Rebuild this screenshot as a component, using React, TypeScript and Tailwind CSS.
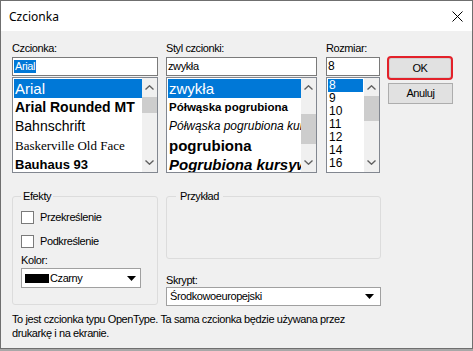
import React from "react";

const ui = "font-['Liberation_Sans',Arial,sans-serif] text-[11px] leading-[13px] tracking-[-0.4px] text-black";

function Chevron({ up }: { up?: boolean }) {
  return (
    <svg width="9" height="5" viewBox="0 0 9 5" className="block">
      <polyline
        points={up ? "0.5,4.5 4.5,0.8 8.5,4.5" : "0.5,0.5 4.5,4.2 8.5,0.5"}
        fill="none"
        stroke="#606060"
        strokeWidth="1.4"
      />
    </svg>
  );
}

function Scrollbar({ thumb }: { thumb: string }) {
  return (
    <div className="flex w-[15px] flex-col bg-[#f0f0f0]">
      <div className="flex h-[18px] items-center justify-center">
        <Chevron up />
      </div>
      <div className="flex-1">
        <div className={`bg-[#cdcdcd] ${thumb}`} />
      </div>
      <div className="flex h-[14px] items-start justify-center pt-[2px]">
        <Chevron />
      </div>
    </div>
  );
}

function ListBox({ thumb, children }: { thumb: string; children: React.ReactNode }) {
  return (
    <div className="mt-[1px] flex h-[96px] border border-[#828790] bg-white">
      <div className="min-w-0 flex-1 overflow-hidden pl-[1px] pt-[1px]">{children}</div>
      <Scrollbar thumb={thumb} />
    </div>
  );
}

function Row({ sel, className = "", children }: { sel?: boolean; className?: string; children: React.ReactNode }) {
  return (
    <div
      className={`flex h-[19px] items-center overflow-hidden whitespace-nowrap pl-[1px] leading-[19px] ${
        sel ? "bg-[#0078d7] text-white" : "text-black"
      } ${className}`}
    >
      {children}
    </div>
  );
}

function Size({ sel, children }: { sel?: boolean; children: React.ReactNode }) {
  return (
    <div
      className={`flex h-[13px] items-center pl-[1px] font-['Liberation_Sans',Arial,sans-serif] text-[12px] leading-[13px] tracking-normal ${
        sel ? "w-[35px] bg-[#0078d7] text-white" : ""
      }`}
    >
      {children}
    </div>
  );
}

function Input({ children }: { children: React.ReactNode }) {
  return (
    <div className="mt-[2px] flex h-[19px] items-center border border-[#7a7a7a] bg-white pl-[1px]">{children}</div>
  );
}

function Triangle() {
  return (
    <svg width="9" height="5" viewBox="0 0 9 5" className="block">
      <polygon points="0,0 9,0 4.5,5" fill="#000" />
    </svg>
  );
}

function Check({ label }: { label: string }) {
  return (
    <div className="flex h-[13px] items-center gap-[6px] pl-[8px]">
      <div className="h-[13px] w-[13px] border border-[#7a7a7a] bg-white" />
      <span>{label}</span>
    </div>
  );
}

export default function App() {
  return (
    <div className="h-[351px] w-[473px] bg-[#a8a8a8]">
      <div className={`flex h-[349px] w-[473px] flex-col border border-[#6f6f6f] bg-[#f0f0f0] ${ui}`}>
        <div className="flex h-[30px] items-center justify-between bg-white pl-[8px] pr-[9px]">
          <span className="font-['Segoe_UI','Noto_Sans',sans-serif] text-[12px] tracking-normal">Czcionka</span>
          <svg width="11" height="11" viewBox="0 0 11 11">
            <path d="M0.5 0.5 L10.5 10.5 M10.5 0.5 L0.5 10.5" stroke="#000" strokeWidth="1" />
          </svg>
        </div>

        <div className="flex flex-col pl-[11px] pt-[11px]">
          <div className="flex items-start">
            <div className="w-[146px]">
              <div>Czcionka:</div>
              <Input>
                <span className="bg-[#0078d7] px-[1px] text-white">Arial</span>
              </Input>
              <ListBox thumb="mt-[1px] h-[16px]">
                <Row sel className="text-[15px] tracking-normal">Arial</Row>
                <Row className="text-[14px] font-bold tracking-normal">Arial Rounded MT</Row>
                <Row className="text-[14px] tracking-normal">Bahnschrift</Row>
                <Row className="font-['Liberation_Serif',serif] text-[13px] tracking-normal">Baskerville Old Face</Row>
                <Row className="text-[13px] font-black tracking-normal">Bauhaus 93</Row>
              </ListBox>
            </div>

            <div className="ml-[8px] w-[151px]">
              <div>Styl czcionki:</div>
              <Input>
                <span>zwykła</span>
              </Input>
              <ListBox thumb="mt-[18px] h-[30px]">
                <Row sel className="text-[15px] tracking-normal">zwykła</Row>
                <Row className="text-[11.5px] font-bold tracking-normal">Półwąska pogrubiona</Row>
                <Row className="text-[12px] italic tracking-normal">Półwąska pogrubiona kursywa</Row>
                <Row className="text-[15px] font-bold tracking-normal">pogrubiona</Row>
                <Row className="text-[15px] font-bold italic tracking-normal">Pogrubiona kursywa</Row>
              </ListBox>
            </div>

            <div className="ml-[9px] w-[54px]">
              <div>Rozmiar:</div>
              <Input>
                <span className="text-[12px] tracking-normal">8</span>
              </Input>
              <ListBox thumb="mt-[0px] h-[25px]">
                <Size sel>8</Size>
                <Size>9</Size>
                <Size>10</Size>
                <Size>11</Size>
                <Size>12</Size>
                <Size>14</Size>
                <Size>16</Size>
              </ListBox>
            </div>

            <div className="ml-[7px] flex w-[66px] flex-col pt-[14px]">
              <button className="flex h-[24px] w-[66px] items-center justify-center rounded-[4px] border-2 border-[#e3212a] bg-[#e1e1e1] shadow-[inset_0_0_0_1px_#cfcfcf]">
                OK
              </button>
              <button className="ml-[1px] mt-[3px] flex h-[21px] w-[65px] items-center justify-center border border-[#adadad] bg-[#e1e1e1]">
                Anuluj
              </button>
            </div>
          </div>

          <div className="mt-[17px] flex items-start">
            <fieldset className="h-[115px] w-[146px] rounded-[3px] border border-[#dcdcdc]">
              <legend className="ml-[8px] px-[2px]">Efekty</legend>
              <div className="mt-[8px]">
                <Check label="Przekreślenie" />
              </div>
              <div className="mt-[11px]">
                <Check label="Podkreślenie" />
              </div>
              <div className="mt-[6px] pl-[8px]">Kolor:</div>
              <div className="ml-[8px] mt-[1px] flex h-[20px] w-[120px] items-center border border-[#a0a0a0] bg-white pl-[3px] pr-[4px]">
                <div className="h-[9px] w-[24px] bg-black" />
                <span className="ml-[1px] flex-1">Czarny</span>
                <Triangle />
              </div>
            </fieldset>

            <div className="ml-[8px] flex w-[215px] flex-col">
              <fieldset className="h-[69px] rounded-[3px] border border-[#dcdcdc]">
                <legend className="ml-[9px] px-[4px]">Przykład</legend>
              </fieldset>
              <div className="mt-[15px]">Skrypt:</div>
              <div className="flex h-[19px] items-center border border-[#a0a0a0] bg-white pl-[3px] pr-[6px]">
                <span className="flex-1">Środkowoeuropejski</span>
                <Triangle />
              </div>
            </div>
          </div>

          <p className="mt-[6px] leading-[14px]">
            To jest czcionka typu OpenType. Ta sama czcionka będzie używana przez
            <br />
            drukarkę i na ekranie.
          </p>
        </div>
      </div>
    </div>
  );
}
